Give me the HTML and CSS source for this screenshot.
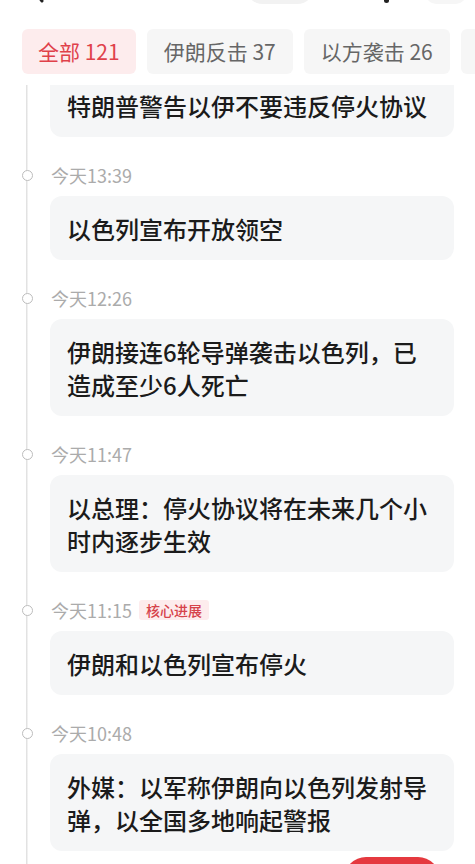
FILE: index.html
```html
<!DOCTYPE html>
<html lang="zh-CN">
<head>
<meta charset="utf-8">
<title>时间线</title>
<link rel="stylesheet" href="styles.css">
</head>
<body>
<div class="page">
  <div class="nav">
    <svg class="back" width="16" height="30" viewBox="0 0 16 30"><path d="M13 2 L3 15 L13 28" fill="none" stroke="#222" stroke-width="3" stroke-linecap="round" stroke-linejoin="round"/></svg>
    <div class="nav-pill"></div>
    <div class="nav-dot"></div>
    <div class="nav-pill2"></div>
  </div>
  <div class="tabs">
    <div class="tab active">全部 121</div>
    <div class="tab">伊朗反击 37</div>
    <div class="tab">以方袭击 26</div>
    <div class="tab">停火 18</div>
  </div>
  <div class="list">
    <div class="item first">
      <div class="card">特朗普警告以伊不要违反停火协议</div>
    </div>
    <div class="item">
      <div class="time-row"><span class="dot"></span><span class="time">今天13:39</span></div>
      <div class="card">以色列宣布开放领空</div>
    </div>
    <div class="item">
      <div class="time-row"><span class="dot"></span><span class="time">今天12:26</span></div>
      <div class="card">伊朗接连6轮导弹袭击以色列，已造成至少6人死亡</div>
    </div>
    <div class="item">
      <div class="time-row"><span class="dot"></span><span class="time">今天11:47</span></div>
      <div class="card">以总理：停火协议将在未来几个小时内逐步生效</div>
    </div>
    <div class="item">
      <div class="time-row"><span class="dot"></span><span class="time">今天11:15</span><span class="badge">核心进展</span></div>
      <div class="card">伊朗和以色列宣布停火</div>
    </div>
    <div class="item">
      <div class="time-row"><span class="dot"></span><span class="time">今天10:48</span></div>
      <div class="card">外媒：以军称伊朗向以色列发射导弹，以全国多地响起警报</div>
    </div>
  </div>
  <div class="float-btn"></div>
</div>
</body>
</html>
```
FILE: styles.css
```css
* { box-sizing: border-box; }
html, body { margin: 0; padding: 0; background: #fff; }
body {
  font-family: "Noto Sans CJK SC", "Noto Sans", sans-serif;
  width: 475px;
  height: 864px;
  overflow: hidden;
}
.page {
  position: relative;
  width: 475px;
  height: 864px;
  overflow: hidden;
  display: flex;
  flex-direction: column;
}
.nav {
  height: 4px;
  overflow: hidden;
  display: flex;
  align-items: flex-end;
  flex-shrink: 0;
}
.back { margin-left: 29px; margin-bottom: 1px; flex-shrink: 0; }
.nav-pill {
  margin-left: 200px;
  width: 70px;
  height: 36px;
  border-radius: 18px;
  background: #f2f2f2;
  flex-shrink: 0;
}
.nav-dot {
  margin-left: 69px;
  width: 5px;
  height: 20px;
  border-radius: 3px;
  background: #222;
  margin-bottom: 1px;
  flex-shrink: 0;
}
.nav-pill2 {
  margin-left: 37px;
  width: 40px;
  height: 36px;
  border-radius: 10px;
  background: #f6f6f6;
  flex-shrink: 0;
}
.tabs {
  display: flex;
  gap: 11px;
  padding: 25px 0 11px 22px;
  white-space: nowrap;
  overflow: hidden;
  flex-shrink: 0;
  background: #fff;
}
.tab {
  flex-shrink: 0;
  height: 45px;
  line-height: 45px;
  padding: 0 17px;
  border-radius: 6px;
  background: #f6f6f6;
  color: #666;
  font-size: 21px;
}
.tab.active {
  padding: 0 16px;
  background: #fdeced;
  color: #e0414a;
}
.list {
  flex: 1;
  overflow: hidden;
}
.item {
  padding-bottom: 27px;
  background: linear-gradient(#e2e2e2, #e2e2e2) 26px 0 / 1.5px 100% no-repeat;
}
.time-row {
  display: flex;
  align-items: center;
  height: 22px;
  margin-bottom: 10px;
  padding-left: 22px;
}
.dot {
  width: 11px;
  height: 11px;
  border: 1.5px solid #bdbdbd;
  border-radius: 50%;
  background: #fff;
  flex-shrink: 0;
}
.time {
  margin-left: 18px;
  font-size: 18px;
  color: #ababab;
  line-height: 22px;
}
.badge {
  margin-left: 7px;
  height: 20px;
  line-height: 20px;
  padding: 0 7px;
  font-size: 14px;
  font-weight: 500;
  color: #d6434b;
  background: #fdeced;
  border-radius: 3px;
}
.card {
  margin: 0 21px 0 50px;
  padding: 16px 17px 15px;
  background: #f5f6f7;
  border-radius: 12px;
  font-size: 24px;
  font-weight: 500;
  line-height: 33px;
  color: #1b1b1b;
}
.item.first .card { margin-top: -12px; }
.float-btn {
  position: absolute;
  left: 344px;
  top: 857px;
  width: 96px;
  height: 44px;
  border-radius: 22px;
  background: #e5393f;
}
```
